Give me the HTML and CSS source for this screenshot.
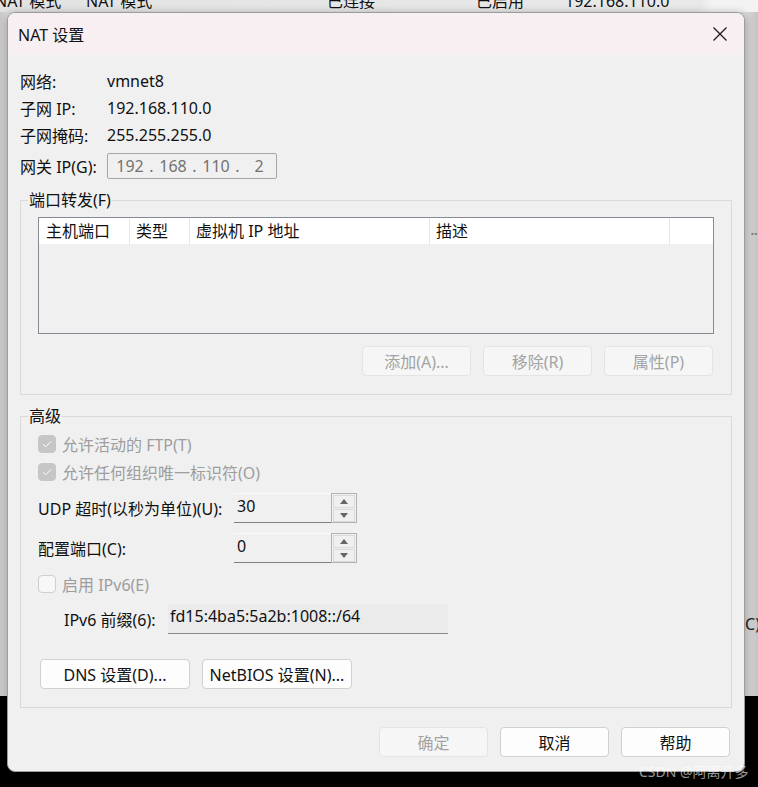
FILE: index.html
```html
<!DOCTYPE html>
<html lang="zh">
<head>
<meta charset="utf-8">
<title>NAT 设置</title>
<link rel="stylesheet" href="styles.css">
</head>
<body>
<div class="desktop">
  <div class="behind">
    <div class="behind-row">
      <span class="bc c1">NAT 模式</span>
      <span class="bc c2">NAT 模式</span>
      <span class="bc c3">已连接</span>
      <span class="bc c4">已启用</span>
      <span class="bc c5">192.168.110.0</span>
    </div>
    <div class="behind-mark m1">...</div>
    <div class="behind-mark m2">C)</div>
  </div>

  <div class="dialog">
    <div class="titlebar">
      <span class="title">NAT 设置</span>
      <svg class="close" width="16" height="16" viewBox="0 0 16 16"><path d="M1.5 1.5 L14.5 14.5 M14.5 1.5 L1.5 14.5" stroke="#1a1a1a" stroke-width="1.3" fill="none"/></svg>
    </div>

    <div class="content">
      <div class="info">
        <span>网络:</span><span>vmnet8</span>
        <span>子网 IP:</span><span>192.168.110.0</span>
        <span>子网掩码:</span><span>255.255.255.0</span>
      </div>
      <div class="gw-row">
        <span>网关 IP(G):</span>
        <div class="ipbox">
          <span class="oct">192</span><span class="dot">.</span>
          <span class="oct">168</span><span class="dot">.</span>
          <span class="oct">110</span><span class="dot">.</span>
          <span class="oct last">2</span>
        </div>
      </div>

      <fieldset class="group">
        <legend>端口转发(F)</legend>
        <div class="group-body">
          <div class="table">
            <div class="thead">
              <span class="th first">主机端口</span>
              <span class="th">类型</span>
              <span class="th">虚拟机 IP 地址</span>
              <span class="th">描述</span>
              <span class="th end"></span>
            </div>
          </div>
          <div class="btn-row">
            <button class="btn disabled">添加(A)...</button>
            <button class="btn disabled">移除(R)</button>
            <button class="btn disabled">属性(P)</button>
          </div>
        </div>
      </fieldset>

      <fieldset class="group adv">
        <legend>高级</legend>
        <div class="group-body adv-body">
          <div class="cb-row dis">
            <span class="cb checked"><svg width="12" height="10" viewBox="0 0 12 10"><path d="M2 5.2 L4.8 7.8 L10 2.4" stroke="#fff" stroke-width="1" fill="none"/></svg></span>
            <span>允许活动的 FTP(T)</span>
          </div>
          <div class="cb-row dis">
            <span class="cb checked"><svg width="12" height="10" viewBox="0 0 12 10"><path d="M2 5.2 L4.8 7.8 L10 2.4" stroke="#fff" stroke-width="1" fill="none"/></svg></span>
            <span>允许任何组织唯一标识符(O)</span>
          </div>
          <div class="spin-row first-spin">
            <span>UDP 超时(以秒为单位)(U):</span>
            <div class="spin">
              <div class="spin-field">30</div>
              <div class="spin-btns">
                <span class="sb"><i class="up"></i></span>
                <span class="sb"><i class="down"></i></span>
              </div>
            </div>
          </div>
          <div class="spin-row second-spin">
            <span>配置端口(C):</span>
            <div class="spin">
              <div class="spin-field">0</div>
              <div class="spin-btns">
                <span class="sb"><i class="up"></i></span>
                <span class="sb"><i class="down"></i></span>
              </div>
            </div>
          </div>
          <div class="cb-row dis ipv6">
            <span class="cb"></span>
            <span>启用 IPv6(E)</span>
          </div>
          <div class="prefix-row">
            <span class="prefix-label">IPv6 前缀(6):</span>
            <div class="prefix-field">fd15:4ba5:5a2b:1008::/64</div>
          </div>
          <div class="dns-row">
            <button class="btn wide">DNS 设置(D)...</button>
            <button class="btn wide">NetBIOS 设置(N)...</button>
          </div>
        </div>
      </fieldset>

      <div class="footer">
        <button class="btn disabled">确定</button>
        <button class="btn">取消</button>
        <button class="btn">帮助</button>
      </div>
    </div>
  </div>

  <div class="watermark">CSDN @阿离开多</div>
</div>
</body>
</html>
```

FILE: styles.css
```css
* { box-sizing: border-box; }

body {
  margin: 0;
  width: 758px;
  height: 787px;
  overflow: hidden;
  background: #000;
  font-family: "Noto Sans", "Noto Sans CJK SC", sans-serif;
  font-size: 16px;
  color: #111;
}

.desktop {
  position: relative;
  width: 758px;
  height: 787px;
}

/* window behind the dialog */
.behind {
  height: 696px;
  background: linear-gradient(to right, #c9c9c9 0, #dcdcdc 7px, #dcdcdc 745px, #c4c4c4 758px);
  position: relative;
}

.behind-row {
  display: flex;
  height: 12px;
  overflow: hidden;
  background: linear-gradient(to right, #e3e3e3, #e9e9e9 700px, #f3f3f3 712px);
  white-space: nowrap;
  line-height: 16px;
}

.bc { display: block; margin-top: -7px; flex: none; color: #111; }
.c1 { width: 91px; margin-left: -5px; }
.c2 { width: 241px; }
.c3 { width: 149px; }
.c4 { width: 89px; }
.c5 { width: 150px; }

.behind-mark {
  position: absolute;
  right: -2px;
  font-size: 16px;
  color: #333;
}
.m1 { top: 218px; color: #777; letter-spacing: -1px; }
.m2 { top: 613px; color: #222; }

/* dialog window */
.dialog {
  position: absolute;
  left: 7px;
  top: 12px;
  width: 738px;
  border: 1px solid #9c9c9c;
  border-radius: 8px;
  background: #f0f0f0;
  overflow: hidden;
  box-shadow: 0 2px 10px rgba(0, 0, 0, 0.35);
}

.titlebar {
  height: 42px;
  display: flex;
  align-items: center;
  justify-content: space-between;
  padding: 0 16px 0 10px;
  background: #f8eff2;
}

.title { font-size: 16px; color: #111; }
.close { display: block; }

.content {
  padding: 12px 12px 0 12px;
}

.info {
  display: grid;
  grid-template-columns: 87px 1fr;
  grid-auto-rows: 27px;
  align-items: center;
}

.gw-row {
  display: flex;
  align-items: center;
  margin-top: 5px;
  height: 26px;
}
.gw-row > span { width: 87px; }

.ipbox {
  width: 170px;
  height: 26px;
  border: 1px solid #a6a6a6;
  border-radius: 2px;
  background: #f0f0f0;
  color: #737373;
  display: flex;
  align-items: center;
  padding-left: 5px;
}
.oct { width: 34px; text-align: center; }
.dot { width: 9px; text-align: center; }

/* group boxes */
.group {
  margin: 11px 0 0;
  padding: 0;
  border: 1px solid #dadada;
  min-width: 0;
}
.group legend {
  margin-left: 7px;
  padding: 0 1px;
  line-height: 20px;
  color: #111;
}
.group-body {
  padding: 7px 17px 18px;
}

.table {
  height: 117px;
  border: 1px solid #878a92;
  background: #f0f0f0;
}
.thead {
  display: grid;
  grid-template-columns: 91px 60px 240px 240px 1fr;
  height: 26px;
  background: #fff;
}
.th {
  border-right: 1px solid #e6e6e6;
  padding-left: 6px;
  line-height: 26px;
  white-space: nowrap;
}
.th.first { padding-left: 7px; }
.th.end { border-right: 0; }

.btn-row {
  display: flex;
  justify-content: flex-end;
  gap: 12px;
  margin-top: 12px;
  padding-right: 1px;
}

.btn {
  width: 109px;
  height: 30px;
  border: 1px solid #d0d0d0;
  border-radius: 4px;
  background: #fdfdfd;
  font-family: inherit;
  font-size: 16px;
  color: #111;
  padding: 0;
}
.btn.disabled {
  background: #f6f6f6;
  border-color: #e4e4e4;
  color: #a3a3a3;
}
.btn.wide { width: 150px; }

/* advanced */
.adv { margin-top: 11px; }
.adv-body { padding-top: 4px; }

.cb-row {
  display: flex;
  align-items: center;
  gap: 6px;
  height: 28px;
}
.cb-row.dis { color: #9d9d9d; }
.cb {
  width: 18px;
  height: 18px;
  border-radius: 4px;
  border: 1px solid #cfcfcf;
  background: #f7f7f7;
  display: flex;
  align-items: center;
  justify-content: center;
}
.cb.checked {
  background: #c6c6c6;
  border-color: #c6c6c6;
}
.cb-row.ipv6 { margin-top: 7px; }

.spin-row {
  display: grid;
  grid-template-columns: 196px 123px;
  align-items: center;
  height: 30px;
}
.first-spin { margin-top: 7px; }
.second-spin { margin-top: 10px; }

.spin {
  display: flex;
  height: 30px;
}
.spin-field {
  flex: 1;
  background: #f0f0f0;
  border-top: 1px solid #fafafa;
  border-bottom: 1px solid #808080;
  padding: 0 0 0 3px;
  line-height: 24px;
}
.spin-btns {
  width: 26px;
  border: 1px solid #b3b3b3;
  padding: 1px 1px 0;
  display: flex;
  flex-direction: column;
  gap: 1px;
}
.sb {
  flex: 1;
  border: 1px solid #dadada;
  display: flex;
  align-items: center;
  justify-content: center;
}
.sb i { display: block; width: 0; height: 0; }
.sb .up {
  border-left: 4.5px solid transparent;
  border-right: 4.5px solid transparent;
  border-bottom: 5px solid #666;
}
.sb .down {
  border-left: 4.5px solid transparent;
  border-right: 4.5px solid transparent;
  border-top: 5px solid #666;
}

.prefix-row {
  display: flex;
  align-items: center;
  margin: 6px 0 0 26px;
  height: 30px;
}
.prefix-label { width: 104px; }
.prefix-field {
  width: 280px;
  height: 30px;
  background: #ebebeb;
  border-bottom: 1px solid #8c8c8c;
  padding: 0 0 0 2px;
  line-height: 24px;
}

.dns-row {
  display: flex;
  gap: 12px;
  margin: 25px 0 0 2px;
}

.footer {
  display: flex;
  justify-content: flex-end;
  gap: 12px;
  padding: 19px 2px 14px 0;
}

.watermark {
  position: absolute;
  left: 639px;
  top: 762px;
  font-size: 14px;
  line-height: 20px;
  color: rgba(255, 255, 255, 0.6);
  white-space: nowrap;
}
```
